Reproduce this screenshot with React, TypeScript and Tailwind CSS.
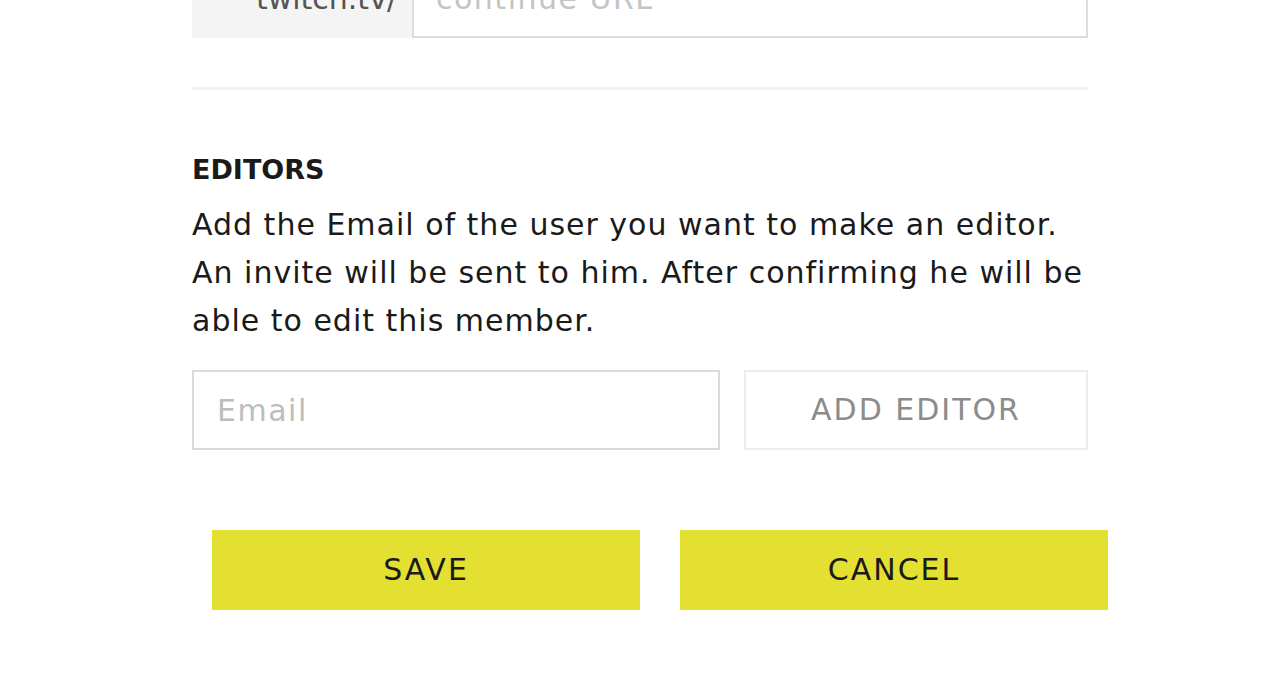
import { useState } from 'react';

const font = { fontFamily: '"DejaVu Sans", Inter, sans-serif' };

const App = () => {
    const [twitch, setTwitch] = useState('');
    const [email, setEmail] = useState('');

    return (
        <div className="min-h-[700px] bg-white overflow-hidden" style={font}>
            <div className="w-[896px] ml-[192px] -mt-[42px]">
                {/* Twitch URL */}
                <div className="flex h-[80px]">
                    <div className="w-[220px] bg-[#f4f4f4] flex items-center justify-end pr-[15px] text-[30px] text-[#555]">
                        twitch.tv/
                    </div>
                    <input
                        value={twitch}
                        onChange={(e) => setTwitch(e.target.value)}
                        placeholder="continue URL"
                        className="flex-1 border-2 border-[#dcdcdc] px-[22px] text-[30px] tracking-[1.5px] outline-none placeholder:text-[#c4c4c4]"
                    />
                </div>

                <div className="mt-[49px] h-[3px] bg-[#f3f3f3]" />

                {/* Editors */}
                <h3 className="mt-[64px] text-[27px] leading-[32px] font-bold text-[#1a1a1a]">EDITORS</h3>
                <p className="mt-[15px] text-[30px] leading-[48px] tracking-[1px] text-[#1a1a1a]">
                    Add the Email of the user you want to make an editor. An invite will be sent to him. After
                    confirming he will be able to edit this member.
                </p>

                <div className="mt-[25px] flex gap-[24px]">
                    <input
                        value={email}
                        onChange={(e) => setEmail(e.target.value)}
                        placeholder="Email"
                        className="w-[528px] h-[80px] border-2 border-[#dadada] px-[23px] text-[30px] tracking-[1.5px] outline-none placeholder:text-[#bdbdbd]"
                    />
                    <button className="flex-1 h-[80px] border-2 border-[#ededed] pb-[2px] text-[30px] tracking-[2px] text-[#8c8c8c]">
                        ADD EDITOR
                    </button>
                </div>
            </div>

            {/* Actions */}
            <div className="mt-[80px] ml-[212px] w-[896px] flex gap-[40px]">
                <button className="flex-1 h-[80px] bg-[#e4e032] pb-[2px] text-[30px] tracking-[2px] text-[#1a1a1a]">SAVE</button>
                <button className="flex-1 h-[80px] bg-[#e4e032] pb-[2px] text-[30px] tracking-[2px] text-[#1a1a1a]">CANCEL</button>
            </div>
        </div>
    );
};

export default App;
